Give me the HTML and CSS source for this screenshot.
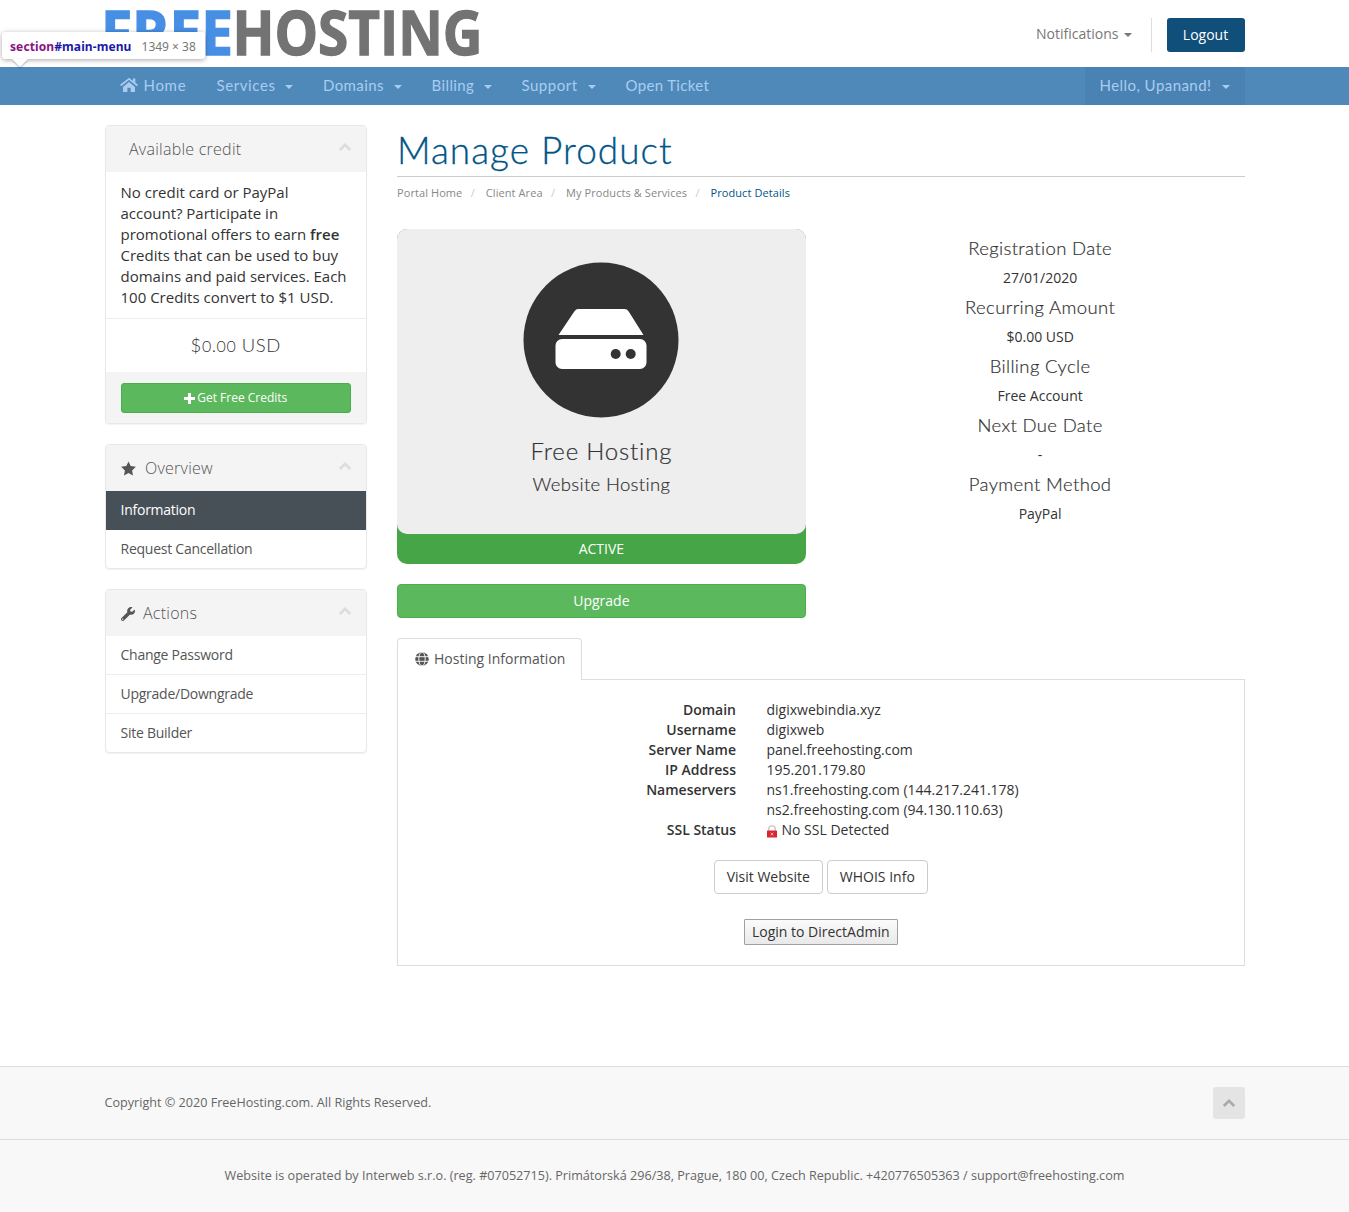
FILE: index.html
```html
<!DOCTYPE html>
<html lang="en">
<head>
<meta charset="utf-8">
<title>Manage Product - FreeHosting</title>
<link rel="stylesheet" href="styles.css">
</head>
<body>
<svg class="sprite" aria-hidden="true">
  <symbol id="chevron" viewBox="0 0 14 10"><path d="M1.800 8 7 2.800 12.200 8" fill="none" stroke="currentColor" stroke-width="2.600"/></symbol>
</svg>
<header class="header">
  <div class="container header-row">
    <svg class="logo" width="377" height="67" viewBox="0 0 377 67" role="img" aria-label="FREEHOSTING">
      <text class="logo-free" x="-4" y="55" textLength="132" lengthAdjust="spacingAndGlyphs">FREE</text>
      <text class="logo-hosting" x="127.500" y="55" textLength="250" lengthAdjust="spacingAndGlyphs">HOSTING</text>
    </svg>
    <div class="top-nav">
      <a class="notifications">Notifications<i class="caret"></i></a>
      <a class="logout">Logout</a>
    </div>
  </div>
  <div class="inspect-tip"><b class="tip-tag">section</b><b class="tip-id">#main-menu</b><span class="tip-size">1349 × 38</span></div>
</header>
<section class="main-menu" id="main-menu">
  <nav class="container menu-row">
    <a class="m-home"><svg width="18" height="14" viewBox="0 0 18 14"><path fill="currentColor" d="M9 4 15 9V13.200a.7.7 0 0 1-.7.7H10.600V9.800H7.400v4.100H3.700a.7.7 0 0 1-.7-.7V9z"/><path fill="none" stroke="currentColor" stroke-width="1.700" d="M.6 7.500 9 .9l8.400 6.600"/><path fill="currentColor" d="M13 .6h2.300v4.800L13 3.500z"/></svg><span>Home</span></a>
    <a class="m-services"><span>Services</span><i class="caret"></i></a>
    <a class="m-domains"><span>Domains</span><i class="caret"></i></a>
    <a class="m-billing"><span>Billing</span><i class="caret"></i></a>
    <a class="m-support"><span>Support</span><i class="caret"></i></a>
    <a class="m-ticket"><span>Open Ticket</span></a>
    <a class="m-user"><span>Hello, Upanand!</span><i class="caret"></i></a>
  </nav>
</section>
<main class="container page">
  <aside class="sidebar">
    <section class="panel">
      <h3 class="panel-head credit-head"><span>Available credit</span><svg class="chev" width="14" height="10"><use href="#chevron"/></svg></h3>
      <div class="credit-text">No credit card or PayPal account? Participate in promotional offers to earn <b>free</b> Credits that can be used to buy domains and paid services. Each 100 Credits convert to $1 USD.</div>
      <div class="credit-amount">$<small>0</small>.<small>00</small> USD</div>
      <div class="panel-foot"><a class="btn-credits"><svg width="11" height="11" viewBox="0 0 11 11"><path fill="currentColor" d="M4 0h3v4h4v3H7v4H4V7H0V4h4z"/></svg>Get Free Credits</a></div>
    </section>
    <section class="panel">
      <h3 class="panel-head"><svg width="15" height="15" viewBox="0 0 15 15"><path fill="currentColor" d="m7.500.4 2.200 4.700 5.200.7-3.800 3.600.9 5.200-4.500-2.500L3 14.600l.9-5.200L.1 5.800l5.200-.7z"/></svg><span>Overview</span><svg class="chev" width="14" height="10"><use href="#chevron"/></svg></h3>
      <a class="item active">Information</a>
      <a class="item">Request Cancellation</a>
    </section>
    <section class="panel">
      <h3 class="panel-head actions-head"><svg width="14" height="14" viewBox="0 0 512 512"><path fill="currentColor" d="M507.700 109.100c-2.200-9-13.500-12.100-20.100-5.500l-74.400 74.400-67.900-11.300L334 98.900l74.400-74.400c6.600-6.600 3.400-17.900-5.700-20.200-47.400-11.700-99.600.9-136.600 37.900-39.600 39.600-50.500 97.100-34.100 147.200L18.700 402.800c-25 25-25 65.500 0 90.500s65.500 25 90.500 0l213.200-213.200c50.100 16.700 107.500 5.700 147.400-34.200 37.100-37.100 49.700-89.300 37.900-136.800zM64 472c-13.200 0-24-10.800-24-24s10.700-24 24-24 24 10.700 24 24-10.700 24-24 24z"/></svg><span>Actions</span><svg class="chev" width="14" height="10"><use href="#chevron"/></svg></h3>
      <a class="item">Change Password</a>
      <a class="item">Upgrade/Downgrade</a>
      <a class="item">Site Builder</a>
    </section>
  </aside>
  <div class="content">
    <h1>Manage Product</h1>
    <ol class="crumbs"><li>Portal Home</li><li>Client Area</li><li>My Products &amp; Services</li><li class="current">Product Details</li></ol>
    <div class="overview">
      <div class="product">
        <div class="status">
          <div class="product-card">
            <svg class="product-icon" width="156" height="156" viewBox="0 0 156 156"><circle cx="78" cy="78" r="77.500" fill="#333"/><path fill="#fff" d="M55.500 47h46q2.600 0 4.200 2.400L120.500 73 H35.500L51.300 49.400Q52.900 47 55.500 47z"/><rect x="32.500" y="77" width="91" height="30" rx="6.500" fill="#fff"/><circle cx="92.700" cy="92" r="5" fill="#333"/><circle cx="107.700" cy="92" r="5" fill="#333"/></svg>
            <h3>Free Hosting</h3>
            <h4>Website Hosting</h4>
          </div>
          <div class="status-text">ACTIVE</div>
        </div>
        <a class="btn-upgrade">Upgrade</a>
      </div>
      <div class="billing">
        <h4>Registration Date</h4><p>27/01/2020</p>
        <h4>Recurring Amount</h4><p>$0.00 USD</p>
        <h4>Billing Cycle</h4><p>Free Account</p>
        <h4>Next Due Date</h4><p>-</p>
        <h4>Payment Method</h4><p>PayPal</p>
      </div>
    </div>
    <div class="tabs"><a class="tab"><svg width="14" height="14" viewBox="0 0 14 14"><circle cx="7" cy="7" r="6.800" fill="currentColor"/><path d="M0 4.700h14M0 9.300h14" stroke="#fff" stroke-width=".9"/><ellipse cx="7" cy="7" rx="3.200" ry="7" fill="none" stroke="#fff" stroke-width=".9"/></svg>Hosting Information</a></div>
    <div class="tab-body">
      <dl>
        <dt>Domain</dt><dd>digixwebindia.xyz</dd>
        <dt>Username</dt><dd>digixweb</dd>
        <dt>Server Name</dt><dd>panel.freehosting.com</dd>
        <dt>IP Address</dt><dd>195.201.179.80</dd>
        <dt>Nameservers</dt><dd>ns1.freehosting.com (144.217.241.178)<br>ns2.freehosting.com (94.130.110.63)</dd>
        <dt>SSL Status</dt><dd><svg class="lock" width="12" height="13" viewBox="0 0 12 13"><path d="M2.700 6V4.200a3.300 3.300 0 0 1 6.600 0V6" fill="none" stroke="#c4c4c4" stroke-width="1.300"/><rect x="1" y="5.500" width="10" height="7" rx=".6" fill="#d9262e"/><path d="m4.700 7.800 2.600 2.600m0-2.600-2.600 2.600" stroke="#f3b5b8"/></svg>No SSL Detected</dd>
      </dl>
      <div class="buttons"><a class="btn">Visit Website</a><a class="btn">WHOIS Info</a></div>
      <button class="login">Login to DirectAdmin</button>
    </div>
  </div>
</main>
<footer>
  <div class="foot-top"><div class="container foot-row"><span>Copyright © 2020 FreeHosting.com. All Rights Reserved.</span><a class="to-top"><svg width="14" height="10"><use href="#chevron"/></svg></a></div></div>
  <div class="foot-bottom">Website is operated by Interweb s.r.o. (reg. #07052715). Primátorská 296/38, Prague, 180 00, Czech Republic. +420776505363 / support@freehosting.com</div>
</footer>
</body>
</html>
```
FILE: styles.css
```css
* { box-sizing: border-box; }
body { margin: 0; background: #fff; color: #333; font: 14px/20px "Open Sans", sans-serif; }
h1, h3, h4, p, ol, dl, dd { margin: 0; padding: 0; }
svg { flex: none; }
.sprite { display: none; }
.container { width: 1140px; margin: 0 auto; }
.caret { display: inline-block; border: 4px solid transparent; border-top-color: currentColor; border-bottom: 0; }

.header { height: 67px; position: relative; }
.header-row { display: flex; justify-content: space-between; height: 67px; }
.logo { display: block; overflow: visible; }
.logo text { font: 700 61px "Open Sans", sans-serif; stroke-width: 1.300px; }
.logo-free { fill: #478fe5; stroke: #478fe5; }
.logo-hosting { fill: #737373; stroke: #737373; }
.top-nav { display: flex; align-items: flex-start; padding-top: 18px; }
.notifications { height: 34px; line-height: 32px; color: #777; padding-right: 19px; margin-right: 15px; border-right: 1px solid #ddd; }
.notifications .caret { margin-left: 5px; vertical-align: 2px; }
.logout { width: 78px; height: 34px; line-height: 34px; text-align: center; color: #fff; background: #0f4f79; border-radius: 3px; }
.inspect-tip { position: absolute; z-index: 2; left: 2px; top: 32px; width: 203px; height: 27px; padding-left: 8px; display: flex; background: #fff; border-radius: 3px; box-shadow: 0 1px 5px rgba(0,0,0,.35); font: 12px/29px "Noto Sans", sans-serif; white-space: nowrap; }
.inspect-tip::after { content: ""; position: absolute; left: 10px; top: 27px; border: 8px solid transparent; border-top-color: #fff; border-bottom: 0; filter: drop-shadow(0 1px 1px rgba(0,0,0,.3)); }
.inspect-tip b { font-size: 12px; letter-spacing: .1px; }
.tip-tag { color: #881280; }
.tip-id { color: #1a1aa6; }
.tip-size { color: #777; font-size: 12px; margin-left: 10px; }

.main-menu { height: 38px; background: #4f89ba; }
.menu-row { display: flex; height: 38px; }
.menu-row a { display: flex; align-items: center; height: 38px; padding: 0 15px; color: #a9cdf0; font: 15px/36px Lato, sans-serif; white-space: nowrap; }
.menu-row span { position: relative; top: -1px; }
.menu-row .caret { margin: 2px 0 0 auto; }
.m-home { width: 97px; gap: 6px; }
.m-home svg { margin-top: -2px; }
.m-home span { letter-spacing: .7px; }
.m-services { width: 106.500px; }
.m-services span { letter-spacing: .6px; }
.m-domains { width: 108.500px; }
.m-domains span { letter-spacing: .4px; }
.m-billing { width: 90px; }
.m-billing span { letter-spacing: .4px; }
.m-support { width: 104px; }
.m-support span { letter-spacing: .5px; }
.m-ticket span { letter-spacing: .35px; }
.menu-row .m-user { width: 160px; margin-left: auto; background: #4a82b3; }
.m-user span { letter-spacing: .45px; }

.page { display: flex; gap: 30px; height: 961px; padding-top: 20px; }
.sidebar { width: 262.500px; flex: none; }
.panel { border: 1px solid #e8e8e8; border-radius: 4px; box-shadow: 0 1px 1px rgba(0,0,0,.05); margin-bottom: 20px; overflow: hidden; }
.panel:nth-child(1) { height: 299px; }
.panel:nth-child(2) { height: 125px; }
.panel-head { display: flex; align-items: center; height: 46px; padding: 0 15px; background: #f4f4f4; color: #555; font: 300 16px/20px "Open Sans", sans-serif; letter-spacing: .25px; }
.panel-head > svg:first-child { margin-top: 1px; }
.panel-head span { margin-left: 9.500px; }
.actions-head span { margin-left: 8.500px; }
.credit-head span { margin-left: 8.500px; }
.panel-head .chev { margin: -4px -1px 0 auto; color: #ddd; }
.credit-text { padding: 10px 15px; height: 147px; font-size: 15px; line-height: 21px; border-bottom: 1px solid #eee; }
.credit-text b, dt { font-weight: 600; }
.credit-amount { height: 53px; line-height: 53px; text-align: center; font-family: Lato, sans-serif; font-weight: 300; font-size: 18.500px; letter-spacing: .55px; }
.credit-amount small { font-size: 16px; }
.panel-foot { background: #f4f4f4; padding: 11px 15px; height: 52px; }
.btn-credits { display: flex; align-items: center; justify-content: center; gap: 2px; height: 30px; background: #5cb85c; border: 1px solid #4cae4c; border-radius: 3px; color: #fff; font-size: 12px; }
.item { display: block; height: 39px; padding: 9px 15px; color: #555; border-bottom: 1px solid #eee; letter-spacing: -.25px; }
.item:last-child { border-bottom: 0; height: 38px; }
.item.active { color: #fff; background: #475057; border-color: #475057; }

.content { flex: 1; min-width: 0; }
h1 { height: 52px; padding-top: 5px; border-bottom: 1px solid #ccc; color: #058; font: 300 37px/40px Lato, sans-serif; letter-spacing: 1px; -webkit-text-stroke: .3px #058; }
.crumbs { display: flex; list-style: none; height: 52px; padding-top: 6px; font-size: 11px; color: #888; letter-spacing: .08px; }
.crumbs li + li::before { content: "/"; color: #ccc; margin: 0 11px 0 8.300px; }
.crumbs .current { color: #058; }
.overview { display: flex; height: 409px; }
.product { width: 409px; }
.status { height: 335px; background: #46a546; border-radius: 10px; color: #fff; text-align: center; }
.product-card { height: 305px; background: #eee; border-radius: 10px; color: #333; padding-top: 33px; }
.product-icon { display: block; margin: 0 auto; }
.product-card h3 { margin-top: 19px; font: 300 24px/27px Lato, sans-serif; letter-spacing: .8px; -webkit-text-stroke: .2px #333; }
.product-card h4 { margin-top: 10px; font: 300 18.500px/20px Lato, sans-serif; letter-spacing: .35px; -webkit-text-stroke: .2px #333; }
.status-text { line-height: 30px; }
.btn-upgrade { display: block; height: 34px; margin-top: 20px; line-height: 32px; text-align: center; color: #fff; background: #5cb85c; border: 1px solid #4cae4c; border-radius: 4px; }
.billing { width: 409px; margin-left: 30px; padding-top: 9px; text-align: center; }
.billing h4 { font: 300 18.500px/20px Lato, sans-serif; letter-spacing: .36px; -webkit-text-stroke: .2px #333; }
.billing p { margin: 10px 0 9px; }
.tabs { display: flex; height: 41px; }
.tab { display: flex; align-items: center; gap: 5px; width: 185px; height: 42px; padding: 0 0 2px 17px; color: #555; background: #fff; border: 1px solid #ddd; border-bottom: 0; border-radius: 4px 4px 0 0; z-index: 1; }
.tab-body { height: 287px; border: 1px solid #ddd; text-align: center; padding-top: 20px; }
dl { display: grid; grid-template-columns: 338px 1fr; column-gap: 30.500px; text-align: left; }
dt { text-align: right; }
.lock { vertical-align: -3px; margin: 0 4px 0 -1px; }
.buttons { display: flex; justify-content: center; gap: 4px; margin: 20px 0 25px; }
.btn { height: 34px; line-height: 32px; padding: 0 12px; border: 1px solid #ccc; border-radius: 4px; }
.login { height: 26px; width: 154px; padding: 0; border: 1px solid #a0a0a0; border-radius: 1px; background: linear-gradient(#fbfbfb, #e9e9e9); color: #333; font: 14px/22px "Open Sans", sans-serif; white-space: nowrap; }

footer { background: #f8f8f8; color: #666; font-size: 12.610px; }
.foot-top { border-top: 1px solid #ddd; height: 73px; }
.foot-row { display: flex; align-items: center; justify-content: space-between; height: 71px; }
.to-top { display: flex; align-items: center; justify-content: center; width: 32px; height: 32px; background: #e4e4e4; border-radius: 3px; color: #aaa; }
.foot-bottom { height: 73px; line-height: 71px; border-top: 1px solid #ddd; text-align: center; }
```
